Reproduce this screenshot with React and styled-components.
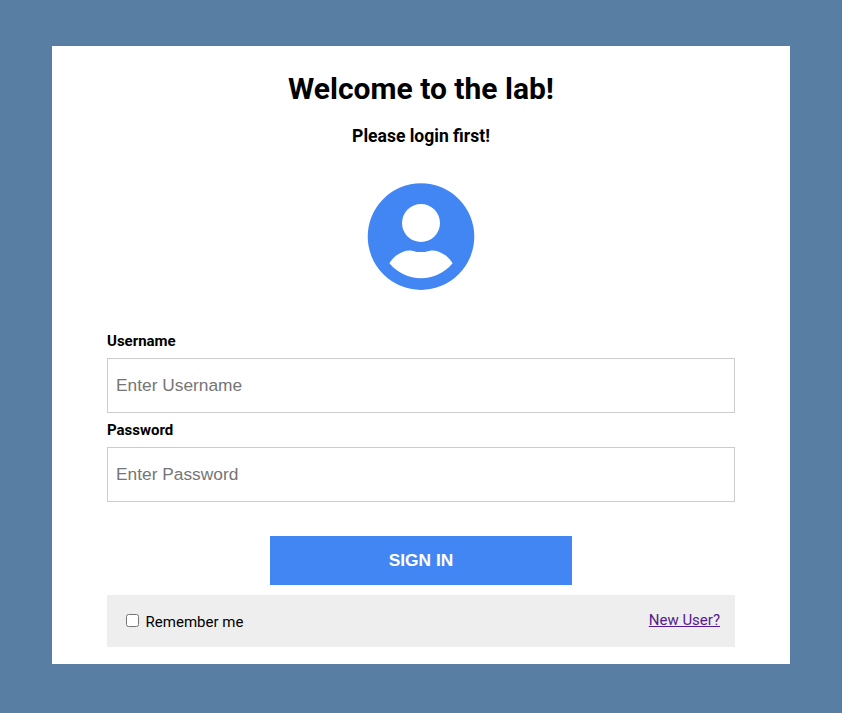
import React from 'react';
import styled, { createGlobalStyle } from 'styled-components';

const GlobalStyle = createGlobalStyle`
  * { box-sizing: border-box; }
  body {
    margin: 0;
    background: #587ea3;
    font-family: Roboto, sans-serif;
    color: #000;
  }
`;

const Page = styled.main`
  display: flex;
  justify-content: center;
  height: 713px;
  padding-top: 46px;
`;

const Card = styled.form`
  display: flex;
  flex-direction: column;
  width: 738px;
  height: 618px;
  padding: 25px 55px 0;
  background: #fff;
`;

const Title = styled.h1`
  margin: 0;
  font-size: 30px;
  line-height: 35px;
  text-align: center;
`;

const Subtitle = styled.h2`
  margin: 20px 0 0;
  font-size: 17.55px;
  line-height: 21px;
  text-align: center;
`;

const Avatar = styled.svg`
  display: block;
  align-self: center;
  width: 128px;
  height: 128px;
  margin-top: 26px;
  fill: #4286f4;
`;

const Field = styled.label`
  display: block;
  height: 89px;
`;

const Fields = styled.div`
  margin-top: 30px;
`;

const FieldLabel = styled.span`
  display: block;
  font-size: 15px;
  font-weight: 700;
  line-height: 18px;
  padding-top: 1px;
`;

const Input = styled.input`
  display: block;
  width: 100%;
  height: 55px;
  margin-top: 8px;
  padding: 0 8px;
  border: 1px solid #ccc;
  font-family: "Liberation Sans", Arial, sans-serif;
  font-size: 17.3333px;
`;

const SubmitButton = styled.button`
  align-self: center;
  width: 302px;
  height: 49px;
  margin-top: 27px;
  border: 0;
  background: #4286f4;
  color: #fff;
  font-family: "Liberation Sans", Arial, sans-serif;
  font-size: 17.3333px;
  font-weight: 700;
`;

const Footer = styled.div`
  display: flex;
  justify-content: space-between;
  height: 52px;
  margin-top: 10px;
  padding: 0 15px 0 19px;
  background: #eee;
  font-size: 15px;
  line-height: 18px;
`;

const Remember = styled.label`
  display: flex;
  gap: 6.6px;
  padding-top: 18px;
`;

const Checkbox = styled.input`
  width: 13px;
  height: 13px;
  margin: 1px 0 0;
`;

const NewUser = styled.a`
  padding-top: 16px;
  color: #551a8b;
  text-decoration: underline;
`;

export default function App() {
  return (
    <Page>
      <GlobalStyle />
      <Card>
        <Title>Welcome to the lab!</Title>
        <Subtitle>Please login first!</Subtitle>
        <Avatar viewBox="0 0 128 128" aria-hidden="true">
          <path
            fillRule="evenodd"
            d="M64 10.300A53.300 53.300 0 1 1 64 116.900A53.300 53.300 0 1 1 64 10.300ZM64 31A19 19 0 1 0 64 69A19 19 0 1 0 64 31ZM32.400 90.300A41 41 0 0 0 95.600 90.300C90.800 82.200 82.300 77.400 75.300 77.400C72.500 77.400 69.500 79.100 64 79.100S55.500 77.400 52.700 77.400C45.700 77.400 37.200 82.200 32.400 90.300Z"
          />
        </Avatar>
        <Fields>
          <Field>
            <FieldLabel>Username</FieldLabel>
            <Input type="text" placeholder="Enter Username" />
          </Field>
          <Field>
            <FieldLabel>Password</FieldLabel>
            <Input type="password" placeholder="Enter Password" />
          </Field>
        </Fields>
        <SubmitButton type="button">SIGN IN</SubmitButton>
        <Footer>
          <Remember>
            <Checkbox type="checkbox" />
            Remember me
          </Remember>
          <NewUser href="#">New User?</NewUser>
        </Footer>
      </Card>
    </Page>
  );
}
